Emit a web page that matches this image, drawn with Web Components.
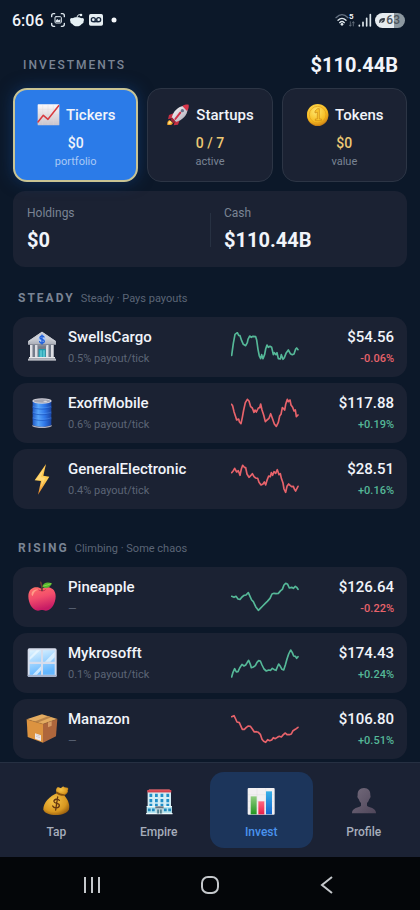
<!DOCTYPE html>
<html lang="en">
<head>
<meta charset="utf-8">
<meta name="viewport" content="width=device-width, initial-scale=1">
<title>Investments</title>
<style>
    html, body {
        margin: 0;
        height: 100%;
    }
    body {
        background: #0c1829;
        color: #f1f4fa;
        font-family: Roboto, "Noto Sans", sans-serif;
        font-size: 12px;
        --card: #1b2233;
        --line: #2c3545;
        --muted: #7a8494;
        --dim: #5b6576;
        --up: #55b898;
        --down: #e8636b;
        --gold: #edc974;
    }
</style>
</head>
<body>
<invest-app></invest-app>

<script>
const PICTURES = {
    chartUp: ['0 0 72 72', `
        <defs><linearGradient id="a" x2="0" y2="1"><stop stop-color="#fbf8fa"/><stop offset="1" stop-color="#c9c3cb"/></linearGradient></defs>
        <rect x="5" y="4" width="65" height="63" rx="2" fill="url(#a)"/>
        <path d="M6 19h63M6 35h63M6 51h63M20 5v61M36 5v61M52 5v61" stroke="#ddd5dc" stroke-width="1"/>
        <path d="M6 57 22 37l14 12L68 8" fill="none" stroke="#d93a3f" stroke-width="4.5" stroke-linejoin="round" stroke-linecap="round"/>`],
    rocket: ['0 0 72 72', `
        <defs><linearGradient id="a" x2="1" y2="1"><stop stop-color="#fff"/><stop offset="1" stop-color="#a9a4b2"/></linearGradient></defs>
        <path d="M4 66c-1-8 1-13 7-15l10 9c-3 6-8 7-17 6z" fill="#f4a52a"/>
        <path d="M7 63c0-5 2-8 6-9l4 4c-2 4-5 5-10 5z" fill="#ffe98a"/>
        <path d="M23 31 9 36 6 49l16-5zM42 49l-6 16-13 2 5-15z" fill="#c72f43"/>
        <path d="M17 44C22 25 35 10 55 8l10 10C64 37 49 52 29 57z" fill="url(#a)"/>
        <path d="M49 9c7-4 13-5 19-4 1 7 0 13-5 19z" fill="#d8364b"/>
        <path d="m18 43 12 14-8 3-8-9z" fill="#9d2638"/>
        <circle cx="49" cy="23" r="5" fill="#68748d"/>
        <path d="M28 48 43 29" stroke="#cf3048" stroke-width="6" stroke-linecap="round"/>`],
    coin: ['0 0 72 72', `
        <defs><radialGradient id="a" cx=".42" cy=".35" r=".7"><stop stop-color="#ffe66c"/><stop offset=".7" stop-color="#f6bb20"/><stop offset="1" stop-color="#c97c13"/></radialGradient></defs>
        <circle cx="38" cy="37" r="32" fill="#c78016"/>
        <circle cx="38" cy="35" r="32" fill="url(#a)"/>
        <circle cx="38" cy="35" r="25" fill="none" stroke="#df9a19" stroke-width="2"/>
        <path d="m30 24 8-7h5v31h6v5H31v-5h6V27l-7 3z" fill="#f9c62f" stroke="#cb8714" stroke-width="2" stroke-linejoin="round"/>`],
    bank: ['0 0 96 96', `
        <defs><linearGradient id="a" x2="0" y2="1"><stop stop-color="#f2f3f5"/><stop offset="1" stop-color="#aaaeb8"/></linearGradient></defs>
        <path d="M12 42h72v36H12z" fill="#747c8b"/>
        <path d="M38 54h21v26H38z" fill="#1f9aae"/><path d="M41 58h7v22h-7zM50 58h7v22h-7z" fill="#53c2ce"/>
        <path d="M12 42h9v37h-9zM27 42h9v37h-9zM60 42h9v37h-9zM75 42h9v37h-9z" fill="#dedfe4"/>
        <path d="M18 42h3v37h-3zM33 42h3v37h-3zM66 42h3v37h-3zM81 42h3v37h-3z" fill="#a7abb5"/>
        <path d="M48 2 6 31v10h84V31z" fill="url(#a)"/><path d="M48 2 6 31h8L48 9l34 22h8z" fill="#c9ccd3"/>
        <path d="M36 41h25v5H36z" fill="#868d99"/>
        <path d="M9 78h78v5H9z" fill="#e7e8eb"/><path d="M6 83h84v6H6z" fill="#b7bac2"/>
        <circle cx="48" cy="25" r="11" fill="#aec9f4"/>
        <path d="M54 18c-3-5-12-4-12 2 0 7 13 3 13 11 0 6-11 8-14 1M48 12v27" fill="none" stroke="#1d5edc" stroke-width="4" stroke-linecap="round"/>`],
    barrel: ['0 0 96 96', `
        <defs><linearGradient id="a"><stop stop-color="#2159c5"/><stop offset=".3" stop-color="#55a4fa"/><stop offset=".65" stop-color="#2f76e8"/><stop offset="1" stop-color="#1944a3"/></linearGradient></defs>
        <path d="M20 12h56v72c-8 8-48 8-56 0z" fill="url(#a)"/>
        <path d="M19 84c9 7 49 7 58 0v4c-9 7-49 7-58 0z" fill="#b3b1c0"/>
        <path d="M19 31c12 7 46 7 58 0M19 48c12 7 46 7 58 0M19 65c12 7 46 7 58 0" fill="none" stroke="#1b53bb" stroke-width="2"/>
        <path d="M20 28c12 6 44 6 56 0M20 45c12 6 44 6 56 0M20 62c12 6 44 6 56 0" fill="none" stroke="#6cb0ff" stroke-width="1"/>
        <ellipse cx="48" cy="12" rx="29" ry="8" fill="#d0cfd8"/>
        <ellipse cx="48" cy="12" rx="25" ry="5" fill="#a3a4b1"/>
        <ellipse cx="58" cy="13" rx="6" ry="2" fill="#d9d8df"/>`],
    bolt: ['0 0 96 96', `
        <defs><linearGradient id="a" x2="0" y2="1"><stop stop-color="#ffb83b"/><stop offset=".5" stop-color="#ffd055"/><stop offset="1" stop-color="#e9852a"/></linearGradient></defs>
        <path d="M60 3 26 52l19 2-9 41 34-54-18-3z" fill="url(#a)"/>
        <path d="M59 7 30 50l20 2-7 24 15-32-14-2z" fill="#ffd878"/>`],
    apple: ['0 0 96 96', `
        <defs><linearGradient id="a" x2=".3" y2="1"><stop stop-color="#ff7268"/><stop offset=".5" stop-color="#f24d6c"/><stop offset="1" stop-color="#c71b65"/></linearGradient></defs>
        <path d="M47 24C34 14 7 17 7 46c0 20 12 43 29 43 5 0 8-2 12-2s7 2 12 2c17 0 29-23 29-43 0-29-29-32-42-22z" fill="url(#a)"/>
        <path d="M18 34c4-8 12-10 19-8-9 1-14 9-17 19-4-1-4-6-2-11z" fill="#ff9c89"/>
        <path d="M35 24c7 6 18 7 26-1-4 9-20 11-26 1z" fill="#b51d50"/>
        <path d="M48 28c1-9-1-17-4-24" fill="none" stroke="#683a36" stroke-width="5" stroke-linecap="round"/>
        <path d="M49 17C52 4 65 2 78 7c-4 12-17 18-29 10z" fill="#55b62e"/>
        <path d="M52 15c8-1 15-4 23-7" fill="none" stroke="#a0e15a" stroke-width="2"/>`],
    window: ['0 0 96 96', `
        <defs><linearGradient id="a" x2=".3" y2="1"><stop stop-color="#e0f4ff"/><stop offset="1" stop-color="#64b7ff"/></linearGradient></defs>
        <rect x="5" y="4" width="87" height="86" rx="5" fill="#d7ddec"/>
        <path d="M5 83h87v3c0 3-2 4-5 4H10c-3 0-5-1-5-4z" fill="#a4b3ce"/>
        <path d="M11 10h34v34H11zM51 10h35v34H51zM11 51h34v32H11zM51 51h35v32H51z" fill="url(#a)"/>
        <path d="m57 44 29-30v17L73 44zM20 83l25-25v12L33 83zM11 31l21-21h10L11 40z" fill="#f0faff" opacity=".7"/>`],
    box: ['0 0 96 96', `
        <path d="M2 19 48 4l46 14-43 16z" fill="#e4ac61"/>
        <path d="M2 19 51 33v56L5 72z" fill="#dc9340"/>
        <path d="m51 33 43-15-4 52-39 19z" fill="#ae663c"/>
        <path d="m66 10 10 3-42 16-10-3z" fill="#bb8448"/>
        <path d="m66 28 11-4v14l-11 5z" fill="#d79c65"/>
        <path d="m27 61 18 6v17l-18-7z" fill="#ece7e9"/><path d="m30 65 12 4M30 70l12 4" stroke="#c5bfc6" stroke-width="2"/>
        <path d="M2 19 51 33l43-15" fill="none" stroke="#94602f" stroke-width="1"/>`],
    bag: ['0 0 96 96', `
        <defs><radialGradient id="a" cx=".4" cy=".35" r=".75"><stop stop-color="#f5c248"/><stop offset=".65" stop-color="#d99820"/><stop offset="1" stop-color="#8b530c"/></radialGradient></defs>
        <path d="M53 24c-6-7-6-15-2-19 5-4 8 3 13 0 4-3 7-5 9-1l10 1c5 4-2 8 1 11-1 6-8 11-13 13z" fill="url(#a)"/>
        <path d="M52 21C30 29 9 51 10 70c2 22 70 24 77 0 4-17-7-35-18-45z" fill="url(#a)"/>
        <path d="M51 20c5 5 12 7 21 7" fill="none" stroke="#85500e" stroke-width="5" stroke-linecap="round"/>
        <path d="M58 43c-5-7-17-3-16 4 2 8 17 2 16 12-1 8-16 9-20 1M53 33l-6 39" fill="none" stroke="#653711" stroke-width="4" stroke-linecap="round"/>`],
    office: ['-4 -6 104 104', `
        <path d="M11 9h76v68H11z" fill="#d3edf5"/>
        <path d="M10 7h78v8H10z" fill="#d34450"/><path d="M15 5h68v3H15z" fill="#f06b70"/>
        <path d="M17 19h9v11h-9zM35 19h9v11h-9zM53 19h9v11h-9zM72 19h9v11h-9zM17 36h9v11h-9zM35 36h9v11h-9zM53 36h9v11h-9zM72 36h9v11h-9zM17 52h9v8h-9zM35 52h9v8h-9zM53 52h9v8h-9zM72 52h9v8h-9z" fill="#208ec7"/>
        <path d="M8 60h82v23H8z" fill="#b5e4ef"/><path d="M8 59h82v3H8zM6 82h86v4H6z" fill="#edf8fa"/>
        <path d="M12 67h9v9h-9zM25 67h9v9h-9zM64 67h9v9h-9zM78 67h9v9h-9z" fill="#2388bd"/>
        <path d="M36 60h27v7H36z" fill="#69737d"/><path d="M39 67h21v16H39z" fill="#c3d1d5"/><path d="M42 70h6v13h-6zM51 70h6v13h-6z" fill="#50808f"/>`],
    bars: ['0 0 96 96', `
        <defs>
            <linearGradient id="g" x2="0" y2="1"><stop stop-color="#91cd80"/><stop offset="1" stop-color="#229520"/></linearGradient>
            <linearGradient id="r" x2="0" y2="1"><stop stop-color="#ff667f"/><stop offset="1" stop-color="#e71e49"/></linearGradient>
            <linearGradient id="b" x2="0" y2="1"><stop stop-color="#38b0e8"/><stop offset="1" stop-color="#1466cd"/></linearGradient>
        </defs>
        <rect x="8" y="6" width="81" height="80" rx="3" fill="#f2f0f2"/>
        <path d="M9 26h79M9 46h79M9 66h79M36 7v78M62 7v78" stroke="#dad7dc" stroke-width="1"/>
        <path d="M17 31h18v54H17z" fill="url(#g)"/><path d="M40 46h18v39H40z" fill="url(#r)"/><path d="M63 16h18v69H63z" fill="url(#b)"/>`],
    person: ['0 0 96 96', `
        <defs><linearGradient id="a" x2="1" y2="1"><stop stop-color="#746b7c"/><stop offset="1" stop-color="#4f465a"/></linearGradient></defs>
        <path d="M48 6c13 0 20 9 19 22 2 4 0 9-3 11-2 6-4 9-7 12v8c5 6 28 5 27 23H12c-1-18 22-17 27-23v-8c-3-3-5-6-7-12-3-2-5-7-3-11C28 15 35 6 48 6z" fill="url(#a)"/>`]
};

class EmojiPic extends HTMLElement {
    constructor() {
        super();
        this.attachShadow({ mode: 'open' });
    }

    connectedCallback() {
        const [box, shapes] = PICTURES[this.getAttribute('name')];
        this.shadowRoot.innerHTML = `
            <style>
            :host {
                display: block;
                flex: none;
                width: 32px;
                height: 32px;
            }
            :host([small]) {
                width: 24px;
                height: 24px;
            }
            svg {
                display: block;
                width: 100%;
                height: 100%;
            }
            </style>
            <svg viewBox="${box}" aria-hidden="true">${shapes}</svg>
        `;
    }
}

class StatusBar extends HTMLElement {
    constructor() {
        super();
        this.attachShadow({ mode: 'open' }).innerHTML = `
            <style>
            :host {
                display: flex;
                justify-content: space-between;
                align-items: center;
                flex: none;
                height: 40px;
                padding: 0 15px 0 12px;
                font-size: 16px;
                font-weight: 500;
            }
            div {
                display: flex;
                align-items: center;
                gap: 5px;
            }
            .clock {
                margin-right: 2px;
            }
            .right {
                gap: 3px;
            }
            .wifi {
                display: flex;
                align-items: flex-start;
                gap: 0;
            }
            .band {
                font-size: 8px;
                line-height: 8px;
                font-weight: 700;
            }
            .band svg {
                display: block;
            }
            .battery {
                box-sizing: border-box;
                width: 30px;
                height: 15px;
                padding: 0 5px 0 4px;
                border-radius: 8px;
                gap: 1px;
                justify-content: space-between;
                background: linear-gradient(90deg, #e6ebef 63%, #8c979f 63%);
                color: #4c545c;
                font-size: 12px;
                line-height: 15px;
            }
            </style>
            <div>
                <span class="clock">6:06</span>
                <svg width="14" height="14" viewBox="0 0 42 42" fill="none" stroke="#dfe8ef" stroke-width="4" stroke-linecap="round">
                    <path d="M2 11V8q0-6 6-6h3M31 2h3q6 0 6 6v3M40 31v3q0 6-6 6h-3M11 40H8q-6 0-6-6v-3"/>
                    <rect x="12" y="11" width="19" height="19" rx="3" stroke-width="3"/>
                    <path d="M14 27v-4l5-5 4 4 5-3v8z" fill="#dfe8ef" stroke="none"/>
                </svg>
                <svg width="14" height="14" viewBox="0 0 42 42" fill="#e6f0f4">
                    <path d="M21 13c12 0 20 6 20 14-1 4-4 5-6 6-3 5-8 7-14 7s-11-2-14-7c-2-1-5-2-6-6 0-8 8-14 20-14z"/>
                    <circle cx="5" cy="20" r="5"/><circle cx="37" cy="20" r="5"/><circle cx="33" cy="6" r="4"/>
                    <path d="M21 14c1-7 4-11 12-8" fill="none" stroke="#e6f0f4" stroke-width="3"/>
                </svg>
                <svg width="14" height="12" viewBox="0 0 42 36">
                    <rect width="42" height="35" rx="5" fill="#e6eef2"/>
                    <g fill="none" stroke="#15243a" stroke-width="4"><circle cx="13" cy="17" r="6"/><circle cx="29" cy="17" r="6"/><path d="M13 23h16"/></g>
                </svg>
                <svg width="14" height="14" viewBox="0 0 14 14"><circle cx="6" cy="7" r="2.5" fill="#f4f7fa"/></svg>
            </div>
            <div class="right">
                <div class="wifi">
                    <svg width="14" height="14" viewBox="0 0 42 42" fill="none" stroke-width="4" stroke-linecap="round">
                        <path d="M3 14q18-18 36 0" stroke="#657181"/>
                        <path d="M9 22q12-12 24 0M14 29q7-7 14 0" stroke="#dfe7ec"/>
                        <circle cx="21" cy="34" r="4" fill="#dfe7ec"/>
                    </svg>
                    <span class="band">5
                        <svg width="6" height="6" viewBox="0 0 18 18" fill="none" stroke="#7b8794" stroke-width="2"><path d="M4 1v14m-4-4 4 5 4-5M13 16V2M9 7l4-5 4 5"/></svg>
                    </span>
                </div>
                <svg width="14" height="14" viewBox="0 0 42 42" stroke="#dce5eb" stroke-width="5" stroke-linecap="round"><path d="M4 37v2M15 28v11M26 16v23"/><path d="M37 5v34"/></svg>
                <div class="battery">
                    <svg width="8" height="8" viewBox="0 0 24 24" fill="#39414a"><path d="M1 23c-2-13 5-19 21-18 2 10-3 18-14 17 2-5 5-8 9-10-6 1-10 4-13 11z"/></svg>
                    <span>63</span>
                </div>
            </div>
        `;
    }
}

class AssetTab extends HTMLElement {
    constructor() {
        super();
        this.attachShadow({ mode: 'open' }).innerHTML = `
            <style>
            :host {
                display: block;
                flex: 1;
                min-width: 0;
            }
            button {
                box-sizing: border-box;
                width: 100%;
                height: 94px;
                padding: 12px 0 8px;
                display: flex;
                flex-direction: column;
                align-items: center;
                border: 1px solid var(--line);
                border-radius: 14px;
                background: var(--card);
                color: inherit;
                font: inherit;
            }
            .title {
                display: flex;
                align-items: center;
                gap: 6px;
                height: 28px;
                font-size: 15px;
                font-weight: 500;
            }
            .value {
                margin-top: 4px;
                font-size: 14px;
                line-height: 20px;
                font-weight: 500;
                color: var(--gold);
            }
            .note {
                font-size: 11px;
                line-height: 18px;
                color: var(--muted);
            }
            :host([selected]) button {
                border: 2px solid #c9c494;
                padding: 11px 0 7px;
                background: #2b7be8;
                box-shadow: 0 0 16px #124a9480;
            }
            :host([selected]) .value {
                color: #f1f4fa;
            }
            :host([selected]) .note {
                color: #a9c9f5;
            }
            </style>
            <button type="button" role="tab">
                <span class="title"><slot name="icon"></slot><slot></slot></span>
                <span class="value"><slot name="value"></slot></span>
                <span class="note"><slot name="note"></slot></span>
            </button>
        `;
    }

    connectedCallback() {
        this.shadowRoot.querySelector('button').setAttribute('aria-selected', this.hasAttribute('selected'));
    }
}

class SummaryCard extends HTMLElement {
    constructor() {
        super();
        this.attachShadow({ mode: 'open' }).innerHTML = `
            <style>
            :host {
                display: block;
                margin-top: 9px;
                padding: 12px 14px 14px;
                border-radius: 12px;
                background: var(--card);
            }
            dl {
                display: grid;
                grid-template-columns: 1fr 1fr;
                margin: 0;
            }
            div + div {
                padding-left: 14px;
                background: linear-gradient(#273142, #273142) 0 60% / 1px 34px no-repeat;
            }
            dt {
                line-height: 20px;
                color: var(--muted);
            }
            dd {
                margin: 4px 0 0;
                font-size: 20px;
                line-height: 26px;
                font-weight: 700;
            }
            </style>
            <dl>
                <div><dt>Holdings</dt><dd><slot name="holdings"></slot></dd></div>
                <div><dt>Cash</dt><dd><slot name="cash"></slot></dd></div>
            </dl>
        `;
    }
}

class SparkLine extends HTMLElement {
    constructor() {
        super();
        this.attachShadow({ mode: 'open' });
    }

    connectedCallback() {
        const colour = this.getAttribute('trend') === 'up' ? 'var(--up)' : 'var(--down)';
        this.shadowRoot.innerHTML = `
            <style>
            :host {
                display: block;
            }
            svg {
                display: block;
                width: 68px;
                height: 30px;
            }
            polyline {
                fill: none;
                stroke: ${colour};
                stroke-width: 5;
                stroke-linejoin: round;
                stroke-linecap: round;
            }
            </style>
            <svg viewBox="0 0 204 90" aria-hidden="true"><polyline points="${this.getAttribute('points')}"/></svg>
        `;
    }
}

class StockRow extends HTMLElement {
    constructor() {
        super();
        this.attachShadow({ mode: 'open' });
    }

    connectedCallback() {
        const get = name => this.getAttribute(name);
        const change = get('change');
        this.shadowRoot.innerHTML = `
            <style>
            :host {
                display: block;
            }
            button {
                box-sizing: border-box;
                width: 100%;
                height: 60px;
                padding: 0 13px;
                display: grid;
                grid-template-columns: 32px 1fr 68px 95px;
                align-items: center;
                border: 0;
                border-radius: 14px;
                background: var(--card);
                color: inherit;
                font: inherit;
                text-align: left;
            }
            .name, .price {
                padding-top: 2px;
            }
            .name {
                padding-left: 10px;
            }
            .price {
                text-align: right;
            }
            b, small {
                display: block;
                line-height: 21px;
            }
            b {
                font-size: 15px;
                font-weight: 500;
            }
            small {
                font-size: 11px;
                color: var(--dim);
            }
            .up {
                color: var(--up);
                font-weight: 500;
            }
            .down {
                color: var(--down);
                font-weight: 500;
            }
            </style>
            <button type="button">
                <emoji-pic name="${get('icon')}"></emoji-pic>
                <span class="name"><b>${get('name')}</b><small>${get('note')}</small></span>
                <spark-line trend="${get('trend')}" points="${get('points')}"></spark-line>
                <span class="price"><b>${get('price')}</b><small class="${change[0] === '-' ? 'down' : 'up'}">${change}</small></span>
            </button>
        `;
    }
}

class StockGroup extends HTMLElement {
    constructor() {
        super();
        this.attachShadow({ mode: 'open' }).innerHTML = `
            <style>
            :host {
                display: flex;
                flex-direction: column;
                gap: 6px;
                margin-bottom: 8px;
            }
            header {
                box-sizing: border-box;
                display: flex;
                align-items: baseline;
                gap: 6px;
                height: 44px;
                padding: 20px 5px 0;
                line-height: 22px;
            }
            h2 {
                margin: 0;
                font-size: 12px;
                font-weight: 700;
                letter-spacing: 2px;
                color: var(--muted);
            }
            p {
                margin: 0;
                font-size: 11px;
                color: var(--dim);
            }
            </style>
            <header><h2><slot name="title"></slot></h2><p><slot name="note"></slot></p></header>
            <slot></slot>
        `;
    }
}

class NavItem extends HTMLElement {
    constructor() {
        super();
        this.attachShadow({ mode: 'open' }).innerHTML = `
            <style>
            :host {
                display: block;
                flex: 1;
            }
            a {
                box-sizing: border-box;
                display: flex;
                flex-direction: column;
                align-items: center;
                height: 76px;
                padding-top: 14px;
                gap: 4px;
                border-radius: 14px;
                color: #a6adbb;
                font-weight: 500;
                line-height: 20px;
                text-decoration: none;
            }
            :host([current]) a {
                background: #1c355b;
                color: #4a93ee;
            }
            </style>
            <a href="#"><slot name="icon"></slot><slot></slot></a>
        `;
    }
}

class BottomNav extends HTMLElement {
    constructor() {
        super();
        this.attachShadow({ mode: 'open' }).innerHTML = `
            <style>
            :host {
                display: block;
                flex: none;
                border-top: 1px solid #263042;
                background: #1b2234;
            }
            nav {
                display: flex;
                padding: 9px 5px;
            }
            </style>
            <nav><slot></slot></nav>
        `;
    }
}

class SystemBar extends HTMLElement {
    constructor() {
        super();
        this.attachShadow({ mode: 'open' }).innerHTML = `
            <style>
            :host {
                display: flex;
                flex: none;
                box-sizing: border-box;
                height: 53px;
                padding: 2px 34px 0;
                background: #040609;
            }
            button {
                flex: 1;
                display: flex;
                align-items: center;
                justify-content: center;
                padding: 0;
                border: 0;
                background: none;
            }
            svg {
                fill: none;
                stroke: #c5c8cc;
                stroke-width: 2;
            }
            </style>
            <button type="button" aria-label="Recent apps"><svg width="18" height="18" viewBox="0 0 18 18"><path d="M1 1v16M8 1v16M15 1v16"/></svg></button>
            <button type="button" aria-label="Home"><svg width="18" height="18" viewBox="0 0 18 18"><rect x="1" y="1" width="16" height="16" rx="6"/></svg></button>
            <button type="button" aria-label="Back"><svg width="18" height="18" viewBox="0 0 18 18"><path d="M14 1 4 9l10 8"/></svg></button>
        `;
    }
}

class InvestApp extends HTMLElement {
    constructor() {
        super();
        this.attachShadow({ mode: 'open' }).innerHTML = `
            <style>
            :host {
                display: flex;
                flex-direction: column;
                height: 100vh;
            }
            main {
                flex: 1;
                min-height: 0;
                overflow: hidden;
                padding: 0 13px;
            }
            header {
                box-sizing: border-box;
                display: flex;
                align-items: center;
                justify-content: space-between;
                height: 48px;
                padding: 2px 9px 0 10px;
            }
            h1 {
                margin: 0;
                font-size: 12px;
                font-weight: 500;
                letter-spacing: 2px;
                color: var(--muted);
            }
            strong {
                font-size: 20px;
            }
            .tabs {
                display: flex;
                gap: 9px;
            }
            </style>
            <status-bar></status-bar>
            <main>
                <header><h1>INVESTMENTS</h1><strong>$110.44B</strong></header>
                <div class="tabs" role="tablist">
                    <asset-tab selected><emoji-pic slot="icon" name="chartUp" small></emoji-pic>Tickers<span slot="value">$0</span><span slot="note">portfolio</span></asset-tab>
                    <asset-tab><emoji-pic slot="icon" name="rocket" small></emoji-pic>Startups<span slot="value">0 / 7</span><span slot="note">active</span></asset-tab>
                    <asset-tab><emoji-pic slot="icon" name="coin" small></emoji-pic>Tokens<span slot="value">$0</span><span slot="note">value</span></asset-tab>
                </div>
                <summary-card><span slot="holdings">$0</span><span slot="cash">$110.44B</span></summary-card>
                <stock-group>
                    <span slot="title">STEADY</span><span slot="note">Steady · Pays payouts</span>
                    <stock-row icon="bank" name="SwellsCargo" note="0.5% payout/tick" price="$54.56" change="-0.06%" trend="up"
                        points="2,70 7,34 12,7 19,2 23,10 27,11 32,26 37,37 44,41 49,32 51,22 56,12 61,16 66,13 74,14 77,24 81,52 85,72 89,80 92,68 96,80 101,67 104,51 108,39 112,46 117,43 122,46 127,68 130,62 135,68 138,62 142,80 148,81 151,68 156,82 160,77 165,64 172,54 178,65 184,68 189,66 194,51 197,48 201,53"></stock-row>
                    <stock-row icon="barrel" name="ExoffMobile" note="0.6% payout/tick" price="$117.88" change="+0.19%" trend="down"
                        points="2,19 5,24 9,41 14,56 17,66 23,63 25,71 30,77 34,58 38,36 43,14 49,4 54,9 59,26 64,30 69,43 72,36 76,42 82,30 86,29 89,18 93,36 98,51 103,71 108,66 114,61 119,47 124,61 130,78 136,85 142,73 146,54 150,49 154,29 158,32 161,36 164,19 169,4 172,11 177,6 180,21 185,28 189,39 193,36 196,56 201,51"></stock-row>
                    <stock-row icon="bolt" name="GeneralElectronic" note="0.4% payout/tick" price="$28.51" change="+0.16%" trend="down"
                        points="2,26 7,20 11,13 17,24 22,20 27,34 31,15 35,4 40,10 44,11 48,30 54,40 59,35 64,29 69,38 74,42 80,43 84,55 90,63 96,60 100,54 104,63 108,49 113,36 118,38 121,26 125,34 129,23 134,28 139,17 144,32 148,29 151,43 156,57 159,75 164,85 168,67 173,60 178,65 182,68 187,67 190,75 194,81 201,67"></stock-row>
                </stock-group>
                <stock-group>
                    <span slot="title">RISING</span><span slot="note">Climbing · Some chaos</span>
                    <stock-row icon="apple" name="Pineapple" note="—" price="$126.64" change="-0.22%" trend="up"
                        points="2,43 9,46 15,43 21,51 27,52 33,45 39,40 45,39 52,32 57,43 62,54 67,59 74,74 82,85 88,79 95,72 102,65 109,58 117,49 123,36 129,34 135,35 142,34 149,26 154,22 159,9 164,4 170,7 175,18 182,16 187,19 193,13 197,16 201,22"></stock-row>
                    <stock-row icon="window" name="Mykrosofft" note="0.1% payout/tick" price="$174.43" change="+0.24%" trend="up"
                        points="2,87 6,73 11,62 16,72 21,71 26,60 33,49 39,54 44,51 49,43 53,37 58,49 61,59 67,57 73,53 78,43 83,38 88,39 93,51 99,63 106,69 113,66 119,67 124,61 130,65 135,67 139,57 143,48 148,55 153,64 158,66 163,51 168,33 173,18 179,6 184,14 188,24 193,25 197,31 201,26"></stock-row>
                    <stock-row icon="box" name="Manazon" note="—" price="$106.80" change="+0.51%" trend="down"
                        points="2,8 9,5 14,15 18,24 25,26 29,35 34,46 40,46 46,40 52,36 58,37 64,45 70,54 76,53 82,55 88,61 93,76 98,82 104,85 110,77 116,80 122,78 127,71 133,74 139,70 145,67 151,69 157,62 163,57 168,62 175,62 181,60 186,50 193,46 201,40"></stock-row>
                </stock-group>
            </main>
            <bottom-nav>
                <nav-item><emoji-pic slot="icon" name="bag"></emoji-pic>Tap</nav-item>
                <nav-item><emoji-pic slot="icon" name="office"></emoji-pic>Empire</nav-item>
                <nav-item current><emoji-pic slot="icon" name="bars"></emoji-pic>Invest</nav-item>
                <nav-item><emoji-pic slot="icon" name="person"></emoji-pic>Profile</nav-item>
            </bottom-nav>
            <system-bar></system-bar>
        `;
    }
}

customElements.define('emoji-pic', EmojiPic);
customElements.define('status-bar', StatusBar);
customElements.define('asset-tab', AssetTab);
customElements.define('summary-card', SummaryCard);
customElements.define('spark-line', SparkLine);
customElements.define('stock-row', StockRow);
customElements.define('stock-group', StockGroup);
customElements.define('nav-item', NavItem);
customElements.define('bottom-nav', BottomNav);
customElements.define('system-bar', SystemBar);
customElements.define('invest-app', InvestApp);
</script>
</body>
</html>
